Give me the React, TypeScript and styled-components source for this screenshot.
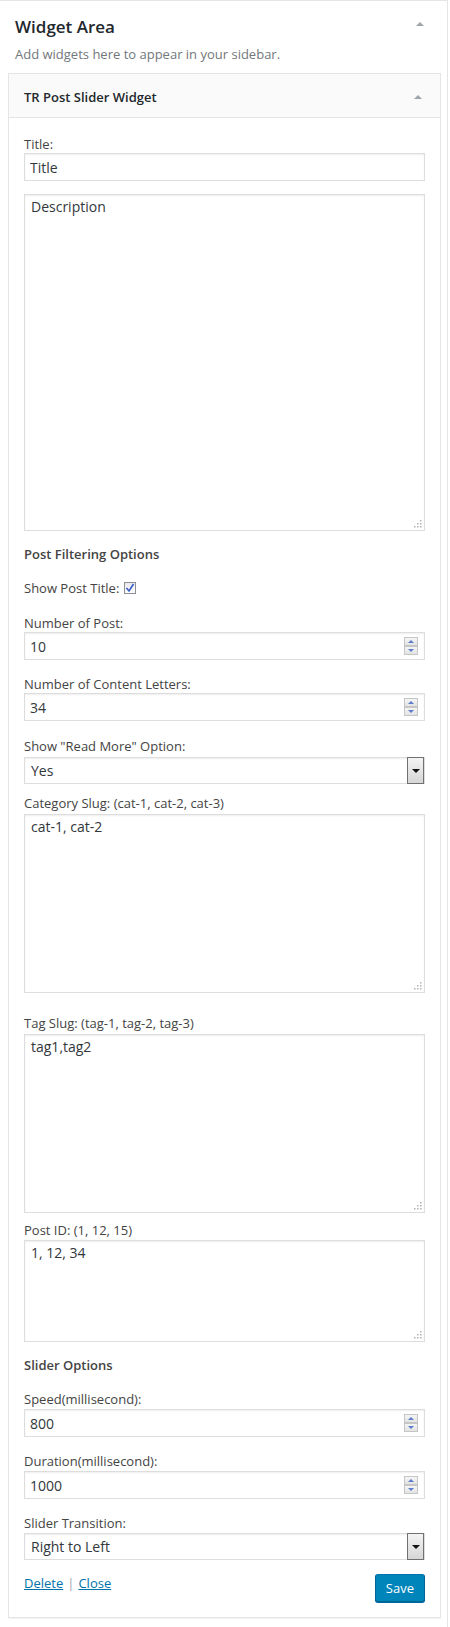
import React from 'react'
import styled, { createGlobalStyle } from 'styled-components'

const GlobalStyle = createGlobalStyle`
	* {
		box-sizing: border-box;
	}
	body {
		margin: 0;
		background: #fff;
		color: #444;
		font-family: "Open Sans", "Liberation Sans", sans-serif;
	}
`

const Sidebar = styled.div`
	width: 448px;
	min-height: 1627px;
	padding: 0 6px 0 8px;
	border-top: 1px solid #e5e5e5;
	border-right: 1px solid #e5e5e5;
	background: #fff;
`

const SidebarHead = styled.div`
	display: flex;
	justify-content: space-between;
	padding: 13px 0 0 7px;
`

const SidebarTitle = styled.h2`
	margin: 0;
	font-size: 17px;
	font-weight: 600;
	line-height: 25px;
	color: #23282d;
`

const Toggle = styled.span<{ $top: number; $right: number }>`
	width: 0;
	height: 0;
	margin-top: ${(p) => p.$top}px;
	margin-right: ${(p) => p.$right}px;
	border-left: 4px solid transparent;
	border-right: 4px solid transparent;
	border-bottom: 4px solid #a0a5aa;
`

const SidebarDesc = styled.p`
	margin: 6px 0 10px 7px;
	font-size: 13px;
	line-height: 18px;
	color: #72777c;
`

const Widget = styled.div`
	border: 1px solid #e5e5e5;
	box-shadow: 0 1px 1px rgba(0, 0, 0, 0.04);
	background: #fff;
`

const WidgetTop = styled.div`
	display: flex;
	justify-content: space-between;
	align-items: center;
	height: 44px;
	padding: 2px 0 0 15px;
	background: #fafafa;
	border-bottom: 1px solid #e5e5e5;
`

const WidgetTitle = styled.h3`
	margin: 0;
	font-size: 13px;
	font-weight: 600;
	line-height: 20px;
	color: #23282d;
`

const WidgetInside = styled.div`
	padding: 18px 15px 15px;
`

const Field = styled.div<{ $gap?: number }>`
	margin-top: ${(p) => p.$gap ?? 0}px;
`

const Label = styled.label`
	display: block;
	font-size: 13px;
	line-height: 17px;
	color: #444;
`

const SectionTitle = styled.p<{ $gap: number }>`
	margin: ${(p) => p.$gap}px 0 0;
	font-size: 13px;
	font-weight: 600;
	line-height: 18px;
	color: #444;
`

const Control = styled.div<{ $mt?: number }>`
	position: relative;
	margin-top: ${(p) => p.$mt ?? 0}px;
`

const TextInput = styled.input`
	display: block;
	width: 100%;
	height: 28px;
	margin: 0;
	padding: 3px 5px;
	border: 1px solid #ddd;
	box-shadow: inset 0 1px 2px rgba(0, 0, 0, 0.07);
	background: #fff;
	font-family: inherit;
	font-size: 14px;
	color: #32373c;
	outline: none;
`

const TextArea = styled.textarea<{ $h: number }>`
	display: block;
	width: 100%;
	height: ${(p) => p.$h}px;
	margin: 0;
	padding: 2px 6px;
	border: 1px solid #ddd;
	box-shadow: inset 0 1px 2px rgba(0, 0, 0, 0.07);
	background: #fff;
	font-family: inherit;
	font-size: 14px;
	line-height: 20px;
	color: #32373c;
	resize: none;
	outline: none;
`

const Grip = styled.svg`
	position: absolute;
	right: 3px;
	bottom: 3px;
`

const Spinner = styled.svg`
	position: absolute;
	top: 5px;
	right: 7px;
`

const SelectField = styled.select`
	display: block;
	width: 100%;
	height: 27px;
	margin: 0;
	padding: 0 24px 0 6px;
	border: 1px solid #ddd;
	box-shadow: inset 0 1px 2px rgba(0, 0, 0, 0.07);
	background: #fff;
	font-family: inherit;
	font-size: 14px;
	color: #32373c;
	appearance: none;
	outline: none;
`

const SelectArrow = styled.span`
	position: absolute;
	top: 0;
	right: 1px;
	bottom: 0;
	width: 17px;
	display: flex;
	align-items: center;
	justify-content: center;
	border: 1px solid #707070;
	background: linear-gradient(#f4f4f4, #d6d6d6);
	pointer-events: none;

	&::after {
		content: '';
		width: 0;
		height: 0;
		border-left: 4px solid transparent;
		border-right: 4px solid transparent;
		border-top: 4px solid #111;
	}
`

const CheckRow = styled.div`
	display: flex;
	align-items: center;
	margin-top: 16px;
	font-size: 13px;
	line-height: 18px;
	color: #444;
`

const CheckBox = styled.span`
	display: inline-flex;
	align-items: center;
	justify-content: center;
	width: 12px;
	height: 12px;
	margin-left: 5px;
	border: 1px solid #8e8f94;
	background: linear-gradient(#e9eaf0, #fdfdfd);
`

const Footer = styled.div`
	display: flex;
	justify-content: space-between;
	align-items: flex-start;
	margin-top: 14px;
`

const Links = styled.div`
	font-size: 13px;
	line-height: 18px;
	color: #a0a5aa;
`

const Link = styled.a`
	color: #0073aa;
	text-decoration: underline;
	cursor: pointer;
`

const Sep = styled.span`
	margin: 0 4px;
	color: #a0a5aa;
`

const SaveButton = styled.button`
	height: 28px;
	padding: 0 10px 1px;
	border: 1px solid #0073aa;
	border-color: #0073aa #006799 #006799;
	border-radius: 3px;
	box-shadow: 0 1px 0 #006799;
	background: #0085ba;
	color: #fff;
	font-family: inherit;
	font-size: 13px;
	line-height: 26px;
	cursor: pointer;
`

const ResizeGrip = () => (
	<Grip width="9" height="9" viewBox="0 0 9 9">
		{[
			[7, 1],
			[4, 4],
			[7, 4],
			[1, 7],
			[4, 7],
			[7, 7],
		].map(([x, y]) => (
			<rect key={`${x}-${y}`} x={x} y={y} width="1.5" height="1.5" fill="#b4b4b4" />
		))}
	</Grip>
)

const SpinButtons = () => (
	<Spinner width="14" height="18" viewBox="0 0 14 18">
		<defs>
			<linearGradient id="spin" x1="0" y1="0" x2="0" y2="1">
				<stop offset="0" stopColor="#f6f6f6" />
				<stop offset="1" stopColor="#e2e2e2" />
			</linearGradient>
		</defs>
		<rect x="0.5" y="0.5" width="13" height="8" fill="url(#spin)" stroke="#c6c6c6" />
		<rect x="0.5" y="9.5" width="13" height="8" fill="url(#spin)" stroke="#c6c6c6" />
		<path d="M4 6 L7 3 L10 6 Z" fill="#5d7ccc" />
		<path d="M4 12 L10 12 L7 15 Z" fill="#5d7ccc" />
	</Spinner>
)

type FieldProps = {
	label: string
	gap: number
	mt?: number
}

const InputField = ({ label, gap, mt, value, spin }: FieldProps & { value: string; spin?: boolean }) => (
	<Field $gap={gap}>
		<Label>{label}</Label>
		<Control $mt={mt}>
			<TextInput defaultValue={value} />
			{spin && <SpinButtons />}
		</Control>
	</Field>
)

const AreaField = ({ label, gap, mt, value, height }: FieldProps & { value: string; height: number }) => (
	<Field $gap={gap}>
		{label && <Label>{label}</Label>}
		<Control $mt={mt}>
			<TextArea $h={height} defaultValue={value} />
			<ResizeGrip />
		</Control>
	</Field>
)

const SelectInput = ({ label, gap, mt, value }: FieldProps & { value: string }) => (
	<Field $gap={gap}>
		<Label>{label}</Label>
		<Control $mt={mt}>
			<SelectField defaultValue={value}>
				<option>{value}</option>
			</SelectField>
			<SelectArrow />
		</Control>
	</Field>
)

const App = () => {
	return (
		<>
			<GlobalStyle />
			<Sidebar>
				<SidebarHead>
					<SidebarTitle>Widget Area</SidebarTitle>
					<Toggle $top={8} $right={17} />
				</SidebarHead>
				<SidebarDesc>Add widgets here to appear in your sidebar.</SidebarDesc>

				<Widget>
					<WidgetTop>
						<WidgetTitle>TR Post Slider Widget</WidgetTitle>
						<Toggle $top={0} $right={18} />
					</WidgetTop>

					<WidgetInside>
						<InputField label="Title:" gap={0} value="Title" />
						<AreaField label="" gap={13} value="Description" height={337} />

						<SectionTitle $gap={14}>Post Filtering Options</SectionTitle>
						<CheckRow>
							Show Post Title:
							<CheckBox>
								<svg width="10" height="10" viewBox="0 0 10 10">
									<path d="M1.5 5 L4 8 L8.5 1" fill="none" stroke="#3a5cc4" strokeWidth="1.6" />
								</svg>
							</CheckBox>
						</CheckRow>

						<InputField label="Number of Post:" gap={18} value="10" spin />
						<InputField label="Number of Content Letters:" gap={16} value="34" spin />
						<SelectInput label={'Show "Read More" Option:'} gap={17} mt={2} value="Yes" />
						<AreaField label="Category Slug: (cat-1, cat-2, cat-3)" gap={11} mt={2} value="cat-1, cat-2" height={179} />
						<AreaField label="Tag Slug: (tag-1, tag-2, tag-3)" gap={22} mt={2} value="tag1,tag2" height={179} />
						<AreaField label="Post ID: (1, 12, 15)" gap={9} mt={1} value="1, 12, 34" height={102} />

						<SectionTitle $gap={14}>Slider Options</SectionTitle>
						<InputField label="Speed(millisecond):" gap={17} mt={1} value="800" spin />
						<InputField label="Duration(millisecond):" gap={16} mt={1} value="1000" spin />
						<SelectInput label="Slider Transition:" gap={16} mt={1} value="Right to Left" />

						<Footer>
							<Links>
								<Link>Delete</Link>
								<Sep>|</Sep>
								<Link>Close</Link>
							</Links>
							<SaveButton>Save</SaveButton>
						</Footer>
					</WidgetInside>
				</Widget>
			</Sidebar>
		</>
	)
}

export default App
